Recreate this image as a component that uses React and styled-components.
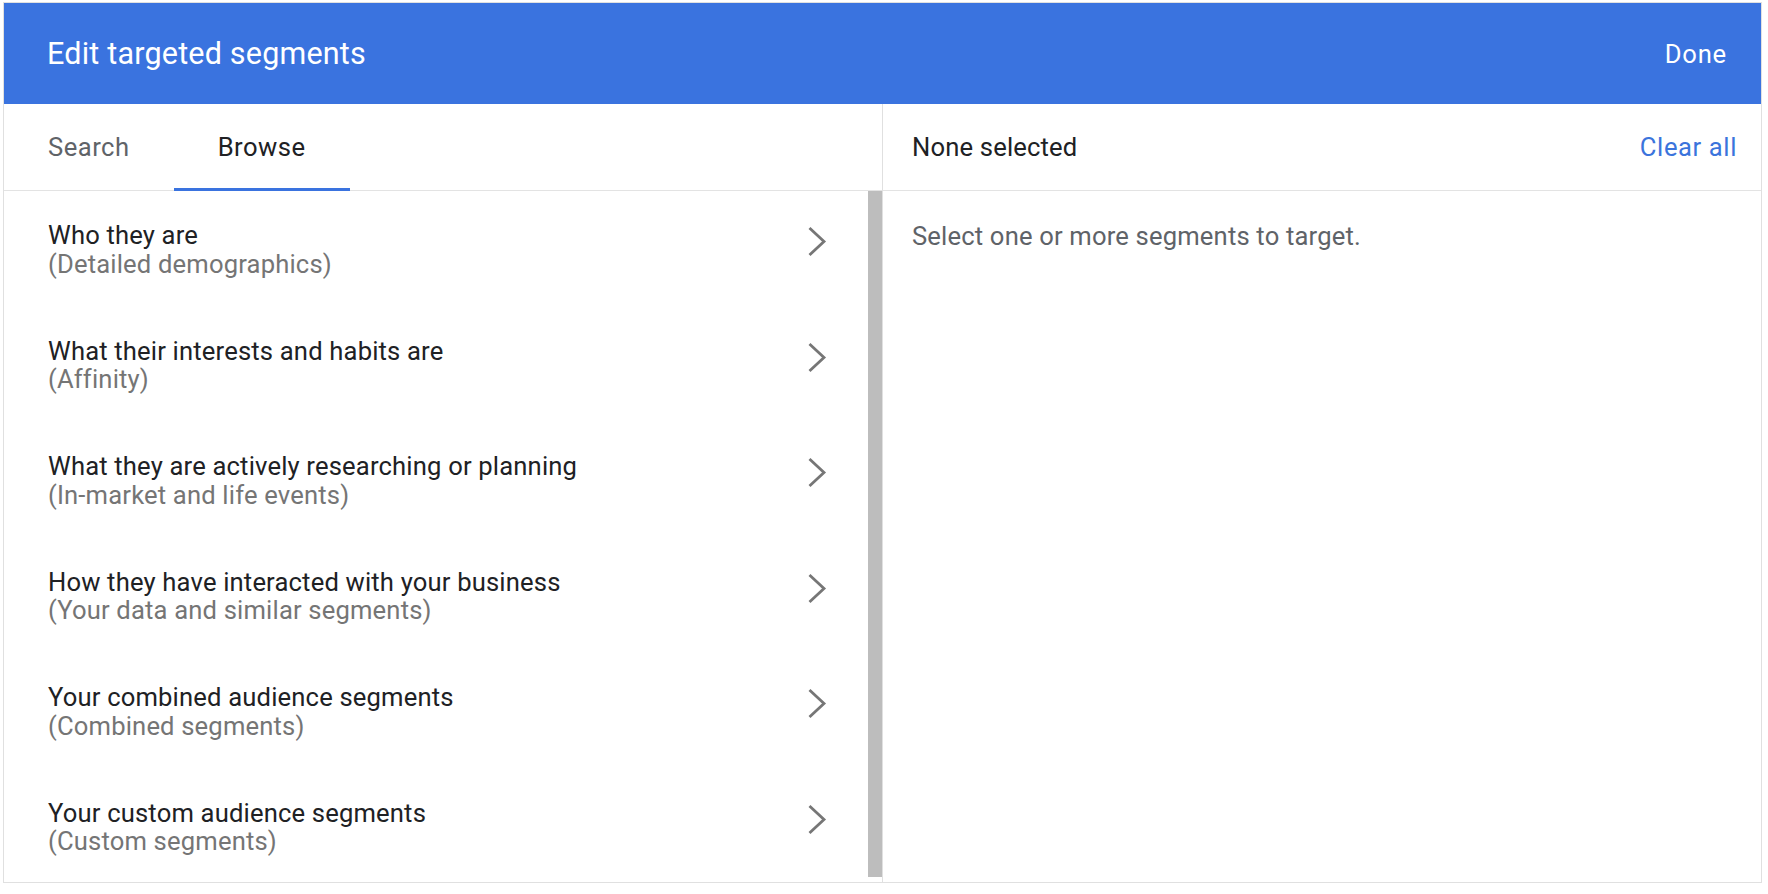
import React from "react";
import styled, { createGlobalStyle } from "styled-components";

const Global = createGlobalStyle`
  html, body { margin: 0; padding: 0; background: #ffffff; }
  body { font-family: Roboto, "Liberation Sans", Arial, sans-serif; -webkit-font-smoothing: antialiased; }
  * { box-sizing: border-box; }
`;

const Page = styled.div`
  padding: 2px 6px 0 3px;
`;

const Card = styled.div`
  width: 1759px;
  height: 881px;
  border: 1px solid #e0e0e0;
  display: flex;
  flex-direction: column;
  background: #fff;
  overflow: hidden;
`;

const Header = styled.header`
  height: 101px;
  flex: none;
  background: #3a73df;
  display: flex;
  align-items: center;
  justify-content: space-between;
  padding: 0 34px 0 43px;
  color: #fff;
`;

const Title = styled.h1`
  margin: 0;
  font-size: 30.5px;
  font-weight: 400;
  letter-spacing: 0.2px;
`;

const HeaderButton = styled.button`
  background: none;
  border: 0;
  padding: 0;
  color: #fff;
  font: 400 25.6px Roboto, "Liberation Sans", sans-serif;
  letter-spacing: 0.8px;
  cursor: pointer;
`;

const Columns = styled.div`
  flex: 1;
  display: flex;
  min-height: 0;
`;

const Pane = styled.section`
  flex: 1 1 0;
  min-width: 0;
  display: flex;
  flex-direction: column;
  border-right: ${(p) => (p.$divider ? "1px solid #e0e0e0" : "0")};
`;

const TopBar = styled.div`
  height: 87px;
  flex: none;
  border-bottom: 1px solid #e3e3e3;
  display: flex;
  align-items: stretch;
  justify-content: space-between;
  padding: ${(p) => p.$pad || "0"};
`;

const Tab = styled.button`
  position: relative;
  background: none;
  border: 0;
  margin: 0;
  padding: 0 44px;
  font: 400 25.6px Roboto, "Liberation Sans", sans-serif;
  letter-spacing: 0.5px;
  color: ${(p) => (p.$active ? "#202124" : "#5f6368")};
  cursor: pointer;
  &::after {
    content: "";
    position: absolute;
    left: 0;
    right: 0;
    bottom: -1px;
    height: 3px;
    background: ${(p) => (p.$active ? "#3a73df" : "transparent")};
  }
`;

const TabList = styled.div`
  display: flex;
`;

const BarLabel = styled.span`
  align-self: center;
  font-size: 25.6px;
  letter-spacing: 0.17px;
  color: #202124;
`;

const LinkButton = styled.button`
  align-self: center;
  background: none;
  border: 0;
  padding: 0;
  font: 400 25.6px Roboto, "Liberation Sans", sans-serif;
  letter-spacing: 0.6px;
  color: #3b74dc;
  cursor: pointer;
`;

const Body = styled.div`
  flex: 1;
  min-height: 0;
  display: flex;
`;

const List = styled.ul`
  flex: 1;
  margin: 0;
  padding: 0;
  list-style: none;
  overflow: hidden;
`;

const Row = styled.li`
  height: 115.5px;
  display: flex;
  align-items: flex-start;
  justify-content: space-between;
  padding: 30px 41px 0 44px;
  cursor: pointer;
`;

const RowText = styled.div`
  display: flex;
  flex-direction: column;
  font-size: 25.6px;
  line-height: 28.5px;
  letter-spacing: 0.17px;
`;

const RowTitle = styled.span`
  color: #202124;
`;

const RowSub = styled.span`
  color: #757575;
`;

const ChevronBox = styled.span`
  display: flex;
  margin-top: 5px;
`;

const ScrollTrack = styled.div`
  width: 14px;
  flex: none;
  padding-bottom: 5px;
  display: flex;
  flex-direction: column;
`;

const ScrollThumb = styled.div`
  background: #bdbdbd;
  width: 100%;
`;

const Empty = styled.p`
  margin: 0;
  padding: 31px 29px;
  font-size: 25.6px;
  line-height: 28.5px;
  letter-spacing: 0.17px;
  color: #5f6368;
`;

const Chevron = () => (
  <ChevronBox>
    <svg width="20" height="31" viewBox="0 0 20 31" aria-hidden="true">
      <polyline
        points="2.5,2 17,15.5 2.5,29"
        fill="none"
        stroke="#767676"
        strokeWidth="2.8"
        strokeLinejoin="miter"
      />
    </svg>
  </ChevronBox>
);

const rows = [
  ["Who they are", "(Detailed demographics)"],
  ["What their interests and habits are", "(Affinity)"],
  ["What they are actively researching or planning", "(In-market and life events)"],
  ["How they have interacted with your business", "(Your data and similar segments)"],
  ["Your combined audience segments", "(Combined segments)"],
  ["Your custom audience segments", "(Custom segments)"],
];

export default function App() {
  return (
    <Page>
      <Global />
      <Card>
        <Header>
          <Title>Edit targeted segments</Title>
          <HeaderButton>Done</HeaderButton>
        </Header>
        <Columns>
          <Pane $divider>
            <TopBar>
              <TabList>
                <Tab>Search</Tab>
                <Tab $active>Browse</Tab>
              </TabList>
            </TopBar>
            <Body>
              <List>
                {rows.map(([t, s]) => (
                  <Row key={t}>
                    <RowText>
                      <RowTitle>{t}</RowTitle>
                      <RowSub>{s}</RowSub>
                    </RowText>
                    <Chevron />
                  </Row>
                ))}
              </List>
              <ScrollTrack>
                <ScrollThumb style={{ height: "100%" }} />
              </ScrollTrack>
            </Body>
          </Pane>
          <Pane>
            <TopBar $pad="0 24px 0 29px">
              <BarLabel>None selected</BarLabel>
              <LinkButton>Clear all</LinkButton>
            </TopBar>
            <Empty>Select one or more segments to target.</Empty>
          </Pane>
        </Columns>
      </Card>
    </Page>
  );
}
